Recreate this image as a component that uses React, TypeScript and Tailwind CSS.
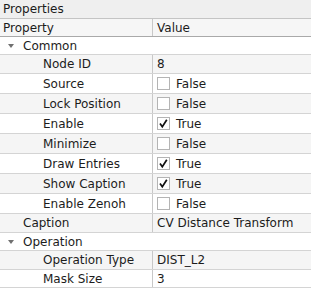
const rows: { kind: "group" | "item"; label: string; value?: string; check?: boolean; indent?: number; tall?: boolean }[] = [
  { kind: "group", label: "Common" },
  { kind: "item", label: "Node ID", value: "8", tall: true },
  { kind: "item", label: "Source", check: false },
  { kind: "item", label: "Lock Position", check: false },
  { kind: "item", label: "Enable", check: true },
  { kind: "item", label: "Minimize", check: false },
  { kind: "item", label: "Draw Entries", check: true },
  { kind: "item", label: "Show Caption", check: true },
  { kind: "item", label: "Enable Zenoh", check: false },
  { kind: "item", label: "Caption", value: "CV Distance Transform", indent: 1, tall: true },
  { kind: "group", label: "Operation" },
  { kind: "item", label: "Operation Type", value: "DIST_L2", tall: true },
  { kind: "item", label: "Mask Size", value: "3" },
];

function CheckBox({ on }: { on: boolean }) {
  return (
    <div className="w-[13px] h-[13px] border border-[#b4b4b4] bg-white flex items-center justify-center shrink-0">
      {on && (
        <svg width="11" height="11" viewBox="0 0 11 11">
          <path d="M2 5.5 L4.3 8.8 L8.8 1.8" fill="none" stroke="#111" strokeWidth="1.7" />
        </svg>
      )}
    </div>
  );
}

export default function App() {
  return (
    <div className="w-[311px] h-[296px] bg-white text-[12px] text-[#1c1c1c] overflow-hidden" style={{ fontFamily: '"DejaVu Sans", sans-serif' }}>
      <div className="h-[19px] bg-[#efefef] border-b border-[#c4c4c4] flex items-center pl-[3px]">Properties</div>
      <div className="h-[18px] flex bg-[#f6f6f6] border-b border-[#a9a9a9]">
        <div className="w-[153px] flex items-center pl-[3px] border-r border-[#c8c8c8]">Property</div>
        <div className="flex-1 flex items-center pl-[4px]">Value</div>
      </div>
      {rows.map((r, i) => {
        if (r.kind === "group") {
          return (
            <div key={i} className="h-[18px] flex items-center bg-white border-b border-[#d4d4d4]">
              <div className="w-[23px] pl-[8px] flex">
                <svg width="6" height="4" viewBox="0 0 6 4">
                  <path d="M0 0 L6 0 L3 4 Z" fill="#707070" />
                </svg>
              </div>
              <div>{r.label}</div>
            </div>
          );
        }
        const shaded = i % 2 === 1;
        const h = r.check !== undefined ? "h-[20px]" : r.tall ? "h-[19px]" : "h-[18px]";
        return (
          <div key={i} className={`${h} flex border-b border-[#d4d4d4] ${shaded ? "bg-[#f5f5f5]" : "bg-white"}`}>
            <div className={`w-[153px] flex items-center border-r border-[#c8c8c8] ${r.indent ? "pl-[23px]" : "pl-[43px]"}`}>{r.label}</div>
            <div className="flex-1 flex items-center pl-[4px] gap-[6px]">
              {r.check !== undefined ? (
                <>
                  <CheckBox on={r.check} />
                  <span>{r.check ? "True" : "False"}</span>
                </>
              ) : (
                <span>{r.value}</span>
              )}
            </div>
          </div>
        );
      })}
    </div>
  );
}
